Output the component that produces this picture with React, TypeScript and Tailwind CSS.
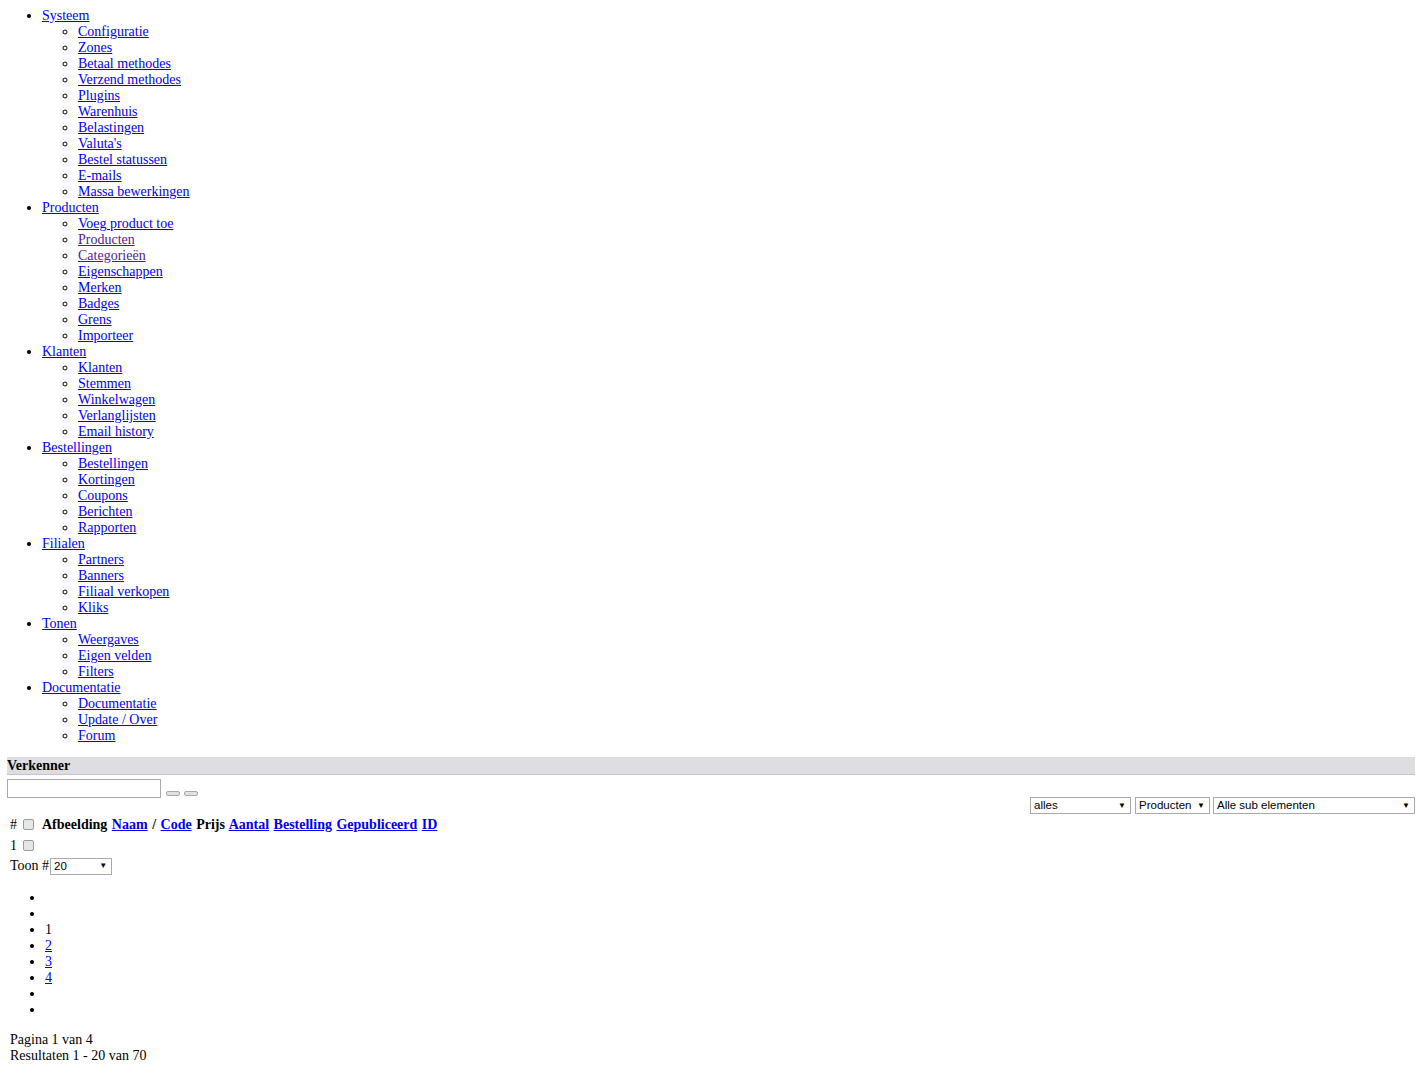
import React from 'react';

type MenuGroup = {
  title: string;
  items: { label: string; visited?: boolean }[];
};

const menu: MenuGroup[] = [
  {
    title: 'Systeem',
    items: [
      { label: 'Configuratie' },
      { label: 'Zones' },
      { label: 'Betaal methodes' },
      { label: 'Verzend methodes' },
      { label: 'Plugins' },
      { label: 'Warenhuis' },
      { label: 'Belastingen' },
      { label: "Valuta's" },
      { label: 'Bestel statussen' },
      { label: 'E-mails' },
      { label: 'Massa bewerkingen' },
    ],
  },
  {
    title: 'Producten',
    items: [
      { label: 'Voeg product toe' },
      { label: 'Producten', visited: true },
      { label: 'Categorieën', visited: true },
      { label: 'Eigenschappen' },
      { label: 'Merken' },
      { label: 'Badges' },
      { label: 'Grens' },
      { label: 'Importeer' },
    ],
  },
  {
    title: 'Klanten',
    items: [
      { label: 'Klanten' },
      { label: 'Stemmen' },
      { label: 'Winkelwagen' },
      { label: 'Verlanglijsten' },
      { label: 'Email history' },
    ],
  },
  {
    title: 'Bestellingen',
    items: [
      { label: 'Bestellingen' },
      { label: 'Kortingen' },
      { label: 'Coupons' },
      { label: 'Berichten' },
      { label: 'Rapporten' },
    ],
  },
  {
    title: 'Filialen',
    items: [{ label: 'Partners' }, { label: 'Banners' }, { label: 'Filiaal verkopen' }, { label: 'Kliks' }],
  },
  {
    title: 'Tonen',
    items: [{ label: 'Weergaves' }, { label: 'Eigen velden' }, { label: 'Filters' }],
  },
  {
    title: 'Documentatie',
    items: [{ label: 'Documentatie' }, { label: 'Update / Over' }, { label: 'Forum' }],
  },
];

const link = 'text-[#0000ee] underline';
const visited = 'text-[#551a8b] underline';

function FakeSelect({ value, width }: { value: string; width: string }) {
  return (
    <div
      className={`inline-flex items-center justify-between h-[17px] border border-[#a9a9a9] bg-white pl-[3px] pr-[4px] font-['Liberation_Sans',Arial,sans-serif] text-[11.5px] leading-[15px] text-black align-middle ${width}`}
    >
      <span>{value}</span>
      <span className="text-[8px] leading-none">▼</span>
    </div>
  );
}

function Check() {
  return (
    <span className="inline-block w-[11px] h-[11px] rounded-[2px] border border-[#9a9a9a] bg-[#e6e6e6] align-[-1px]" />
  );
}

export default function App() {
  return (
    <div className="min-h-[1080px] bg-white p-[7px] font-['Liberation_Serif','Times_New_Roman',serif] text-[14px] leading-[16px] text-black">
      <ul className="list-disc pl-[35px] pt-[1px]">
        {menu.map((group) => (
          <li key={group.title}>
            <a className={link}>{group.title}</a>
            <ul className="list-[circle] pl-[36px]">
              {group.items.map((item) => (
                <li key={item.label}>
                  <a className={item.visited ? visited : link}>{item.label}</a>
                </li>
              ))}
            </ul>
          </li>
        ))}
      </ul>

      <div className="mt-[13px] h-[18px] bg-[#dcdee2] border-b border-[#c4c6ca] font-bold leading-[17px]">Verkenner</div>

      <div className="mt-[4px] flex items-end gap-[4px]">
        <div className="w-[154px] h-[19px] border border-[#a9a9a9] bg-white" />
        <div className="flex gap-[4px] mb-[2px] ml-[1px]">
          <span className="w-[14px] h-[5px] rounded-[2px] border border-[#a9a9a9] bg-[#e1e1e1]" />
          <span className="w-[14px] h-[5px] rounded-[2px] border border-[#a9a9a9] bg-[#e1e1e1]" />
        </div>
      </div>

      <div className="mt-[-1px] flex justify-end">
        <FakeSelect value="alles" width="w-[101px] mr-[4px]" />
        <FakeSelect value="Producten" width="w-[75px] mr-[3px]" />
        <FakeSelect value="Alle sub elementen" width="w-[202px]" />
      </div>

      <div className="pl-[3px]">
        <div className="h-[21px] flex items-center">
          <span>#</span>
          <span className="ml-[6px]"><Check /></span>
          <span className="ml-[8px] font-bold [word-spacing:1px]">
            Afbeelding <a className={link}>Naam</a> / <a className={link}>Code</a> Prijs{' '}
            <a className={link}>Aantal</a> <a className={link}>Bestelling</a>{' '}
            <a className={link}>Gepubliceerd</a> <a className={link}>ID</a>
          </span>
        </div>
        <div className="h-[21px] flex items-center">
          <span>1</span>
          <span className="ml-[6px]"><Check /></span>
        </div>
        <div className="h-[20px] flex items-center">
          <span>Toon #</span>
          <FakeSelect value="20" width="w-[62px] ml-[1px]" />
        </div>

        <ul className="list-disc pl-[35px] mt-[14px] mb-[14px]">
          <li>&nbsp;</li>
          <li>&nbsp;</li>
          <li>1</li>
          <li><a className={link}>2</a></li>
          <li><a className={link}>3</a></li>
          <li><a className={link}>4</a></li>
          <li>&nbsp;</li>
          <li>&nbsp;</li>
        </ul>

        <div>Pagina 1 van 4</div>
        <div>Resultaten 1 - 20 van 70</div>
      </div>
    </div>
  );
}
